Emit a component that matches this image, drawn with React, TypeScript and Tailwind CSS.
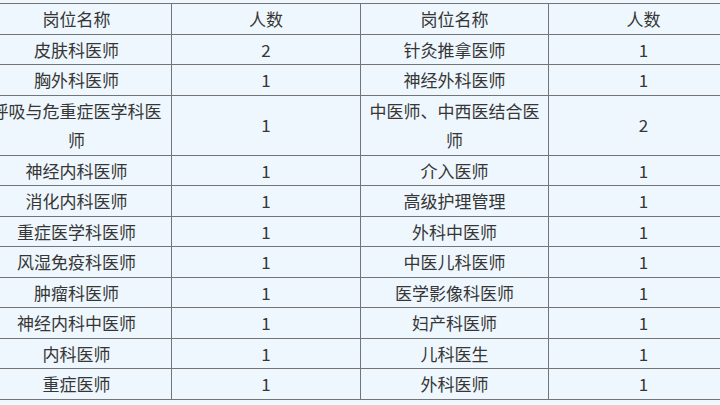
import React from "react";

const rows: [string, string, string, string][] = [
  ["皮肤科医师", "2", "针灸推拿医师", "1"],
  ["胸外科医师", "1", "神经外科医师", "1"],
  ["呼吸与危重症医学科医师", "1", "中医师、中西医结合医师", "2"],
  ["神经内科医师", "1", "介入医师", "1"],
  ["消化内科医师", "1", "高级护理管理", "1"],
  ["重症医学科医师", "1", "外科中医师", "1"],
  ["风湿免疫科医师", "1", "中医儿科医师", "1"],
  ["肿瘤科医师", "1", "医学影像科医师", "1"],
  ["神经内科中医师", "1", "妇产科医师", "1"],
  ["内科医师", "1", "儿科医生", "1"],
  ["重症医师", "1", "外科医师", "1"],
];

const cell =
  "border border-[#747474] text-center align-middle px-[6px] py-0 leading-[29.5px] font-normal";

export default function App() {
  return (
    <div
      className="w-[720px] h-[405px] overflow-hidden bg-[#eef7fd] pt-[3px] text-[#363636] text-[17px]"
      style={{ fontFamily: '"Noto Sans CJK SC", "Noto Sans", sans-serif' }}
    >
      <table className="ml-[-19px] w-[757px] table-fixed border-collapse">
        <colgroup>
          <col className="w-[190px]" />
          <col className="w-[189px]" />
          <col className="w-[188px]" />
          <col className="w-[190px]" />
        </colgroup>
        <thead>
          <tr>
            <th className={cell}>岗位名称</th>
            <th className={cell}>人数</th>
            <th className={cell}>岗位名称</th>
            <th className={cell}>人数</th>
          </tr>
        </thead>
        <tbody>
          {rows.map((r, i) => (
            <tr key={i}>
              <td className={cell}>{r[0]}</td>
              <td className={cell}>{r[1]}</td>
              <td className={cell}>{r[2]}</td>
              <td className={cell}>{r[3]}</td>
            </tr>
          ))}
        </tbody>
      </table>
    </div>
  );
}
